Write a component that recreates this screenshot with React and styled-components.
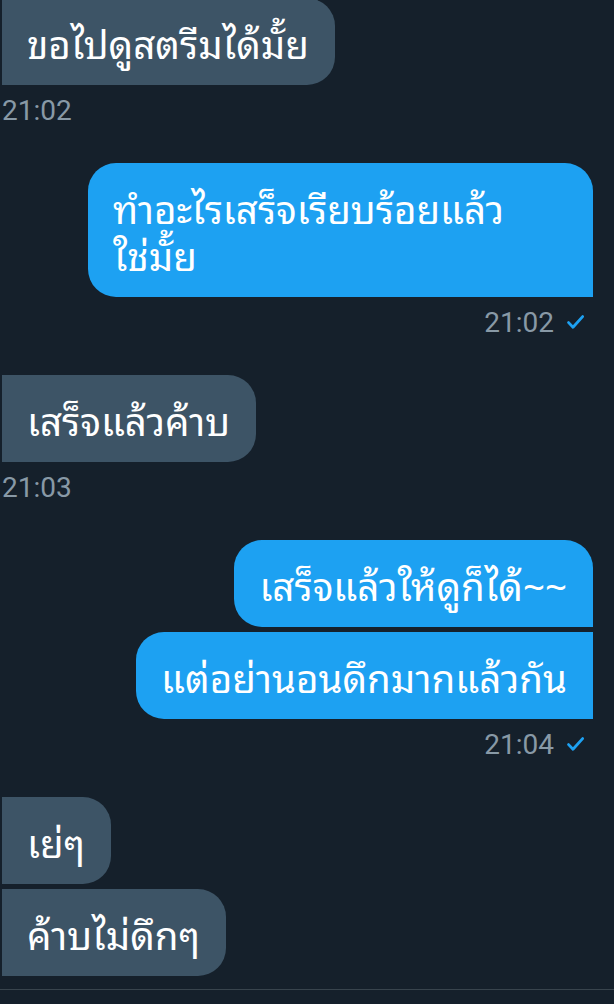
import React from 'react';
import styled, { createGlobalStyle } from 'styled-components';

const Global = createGlobalStyle`
  html, body {
    margin: 0;
    padding: 0;
    background: #15202b;
  }
  body {
    width: 614px;
    height: 1004px;
    overflow: hidden;
  }
`;

const Screen = styled.div`
  width: 614px;
  height: 1004px;
  background: #15202b;
  display: flex;
  flex-direction: column;
  overflow: hidden;
`;

const Thread = styled.div`
  flex: 1;
  display: flex;
  flex-direction: column;
  gap: 36px;
  margin-top: -2px;
`;

const Group = styled.div`
  display: flex;
  flex-direction: column;
  align-items: ${p => (p.$mine ? 'flex-end' : 'flex-start')};
  gap: 5px;
  padding: ${p => (p.$mine ? '0 21px 0 0' : '0 0 0 2px')};
`;

const Bubble = styled.div`
  box-sizing: border-box;
  max-width: 505px;
  width: ${p => (p.$wrapped ? '505px' : 'auto')};
  padding: 20px 26px 20px 25px;
  font-family: "Noto Sans Thai Looped", "Noto Sans Thai", "Noto Sans", sans-serif;
  font-size: 38.5px;
  line-height: 47px;
  color: #ffffff;
  background: ${p => (p.$mine ? '#1da1f2' : '#3d5466')};
  border-radius: ${p =>
    p.$mine
      ? `28px ${p.$first ? '28px' : '0'} 0 28px`
      : '0 28px 28px 0'};
`;

const Meta = styled.div`
  display: flex;
  align-items: center;
  justify-content: ${p => (p.$mine ? 'flex-end' : 'flex-start')};
  gap: 13px;
  height: 34px;
  margin-top: 8px;
  padding: ${p => (p.$mine ? '0 30px 0 0' : '0 0 0 2px')};
  font-family: Roboto, "Liberation Sans", sans-serif;
  font-size: 28px;
  color: #8899a6;
`;

const Composer = styled.div`
  height: 14px;
  border-top: 1px solid #38444d;
`;

function Check() {
  return (
    <svg width="17" height="14" viewBox="0 0 17 14">
      <polyline
        points="1.6,7.6 6,12.2 15.6,1.6"
        fill="none"
        stroke="#1da1f2"
        strokeWidth="2.8"
        strokeLinecap="round"
        strokeLinejoin="round"
      />
    </svg>
  );
}

const thread = [
  { mine: false, time: '21:02', messages: ['ขอไปดูสตรีมได้มั้ย'] },
  { mine: true, time: '21:02', messages: [['ทำอะไรเสร็จเรียบร้อยแล้ว', 'ใช่มั้ย']] },
  { mine: false, time: '21:03', messages: ['เสร็จแล้วค้าบ'] },
  { mine: true, time: '21:04', messages: ['เสร็จแล้วให้ดูก็ได้~~', 'แต่อย่านอนดึกมากแล้วกัน'] },
  { mine: false, messages: ['เย่ๆ', 'ค้าบไม่ดึกๆ'] },
];

export default function App() {
  return (
    <Screen>
      <Global />
      <Thread>
        {thread.map((g, i) => (
          <div key={i}>
            <Group $mine={g.mine}>
              {g.messages.map((m, j) => (
                <Bubble
                  key={j}
                  $mine={g.mine}
                  $first={j === 0}
                  $wrapped={Array.isArray(m)}
                >
                  {Array.isArray(m)
                    ? m.map((line, k) => (
                        <React.Fragment key={k}>
                          {k > 0 && <br />}
                          {line}
                        </React.Fragment>
                      ))
                    : m}
                </Bubble>
              ))}
            </Group>
            {g.time && (
              <Meta $mine={g.mine}>
                {g.time}
                {g.mine && <Check />}
              </Meta>
            )}
          </div>
        ))}
      </Thread>
      <Composer />
    </Screen>
  );
}
